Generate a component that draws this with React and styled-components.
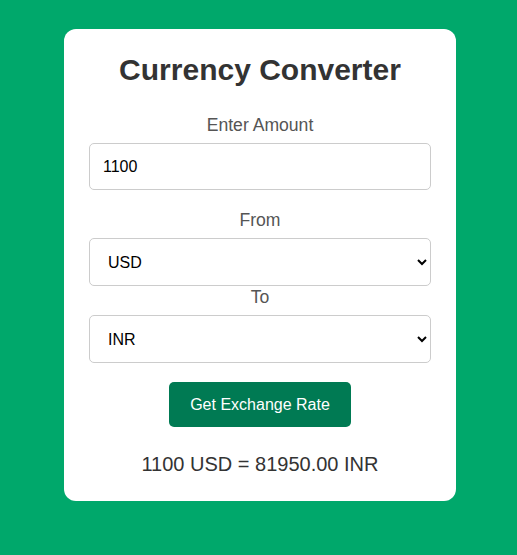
import React, { useState } from "react";
import styled, { createGlobalStyle } from "styled-components";

const Global = createGlobalStyle`
  html, body { margin: 0; padding: 0; }
  body {
    background: #00a86b;
    font-family: "Liberation Sans", Arial, sans-serif;
    min-height: 555px;
  }
  * { box-sizing: border-box; }
`;

const Page = styled.div`
  display: flex;
  justify-content: center;
  padding: 29px 0 0 3px;
`;

const Card = styled.div`
  width: 392px;
  background: #fff;
  border-radius: 12px;
  padding: 24px 25px 25px;
  display: flex;
  flex-direction: column;
  align-items: stretch;
  text-align: center;
`;

const Title = styled.h1`
  margin: 0 0 28px;
  font-size: 30px;
  line-height: 34px;
  font-weight: 700;
  color: #333;
`;

const Label = styled.label`
  display: block;
  font-size: 17.6px;
  line-height: 20px;
  color: #555;
  margin-bottom: 8px;
`;

const Input = styled.input`
  display: block;
  width: 100%;
  height: 47px;
  padding: 0 13px;
  border: 1px solid #ccc;
  border-radius: 5px;
  font-family: "Liberation Sans", Arial, sans-serif;
  font-size: 16px;
  color: #000;
  background: #fff;
  margin-bottom: ${(p) => p.$gap || 0}px;
  outline: none;
`;

const Select = styled.select`
  display: block;
  width: 100%;
  height: 48px;
  padding: 0 12px 0 14px;
  border: 1px solid #ccc;
  border-radius: 5px;
  font-family: "Liberation Sans", Arial, sans-serif;
  font-size: 16px;
  color: #000;
  background: #fff;
  margin-bottom: ${(p) => p.$gap || 0}px;
  outline: none;
`;

const Button = styled.button`
  align-self: center;
  height: 45px;
  padding: 0 21px;
  border: none;
  border-radius: 5px;
  background: #007a53;
  color: #fff;
  font-family: "Liberation Sans", Arial, sans-serif;
  font-size: 16px;
  cursor: pointer;
  margin-bottom: 25px;
`;

const Result = styled.p`
  margin: 0;
  font-size: 20px;
  line-height: 24px;
  color: #333;
`;

export default function App() {
  const [amount, setAmount] = useState("1100");
  const [from, setFrom] = useState("USD");
  const [to, setTo] = useState("INR");
  const currencies = ["USD", "EUR", "GBP", "INR", "JPY"];
  return (
    <>
      <Global />
      <Page>
        <Card>
          <Title>Currency Converter</Title>
          <Label>Enter Amount</Label>
          <Input $gap={20} value={amount} onChange={(e) => setAmount(e.target.value)} />
          <Label>From</Label>
          <Select $gap={1} value={from} onChange={(e) => setFrom(e.target.value)}>
            {currencies.map((c) => (
              <option key={c}>{c}</option>
            ))}
          </Select>
          <Label>To</Label>
          <Select $gap={19} value={to} onChange={(e) => setTo(e.target.value)}>
            {currencies.map((c) => (
              <option key={c}>{c}</option>
            ))}
          </Select>
          <Button>Get Exchange Rate</Button>
          <Result>1100 USD = 81950.00 INR</Result>
        </Card>
      </Page>
    </>
  );
}
